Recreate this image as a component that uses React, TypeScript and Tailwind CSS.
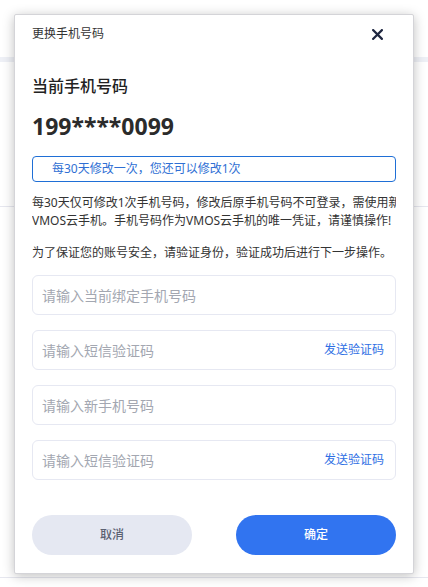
import React from "react";

const font = { fontFamily: '"Noto Sans", "Noto Sans CJK SC", sans-serif' };

function Field({ placeholder, action }: { placeholder: string; action?: string }) {
  return (
    <div className="flex h-[40px] items-center justify-between rounded-[6px] border border-[#e6e8f2] bg-white pl-[9px] pr-[11px]">
      <span className="text-[14px] text-[#a3a7b1]">{placeholder}</span>
      {action && <span className="text-[12px] text-[#2f6fe4]">{action}</span>}
    </div>
  );
}

export default function App() {
  return (
    <div className="relative h-[587px] w-[428px] overflow-hidden bg-white" style={font}>
      <div className="absolute left-0 right-0 top-[57px] h-[5px] bg-[#eef0f6]" />
      <div className="absolute left-0 right-0 top-[206px] h-px bg-[#e6e7ef]" />
      <div className="absolute left-0 right-0 top-[577px] h-px bg-[#e6e7ef]" />
      <div className="absolute left-[14px] top-[14px] flex w-[400px] flex-col rounded-[2px] border border-[#d4d4d8] bg-white px-[17px] pb-[18px] shadow-[0_2px_12px_rgba(0,0,0,0.25)]">
        <div className="flex items-center justify-between pt-[9px]">
          <span className="text-[12px] leading-[20px] text-[#333]">更换手机号码</span>
          <svg width="11" height="11" viewBox="0 0 10 10" className="mr-[13px]">
            <path d="M1 1L9 9M9 1L1 9" stroke="#1e2640" strokeWidth="2" strokeLinecap="square" />
          </svg>
        </div>
        <div className="mt-[30px] text-[16px] font-medium leading-[24px] text-[#222]">当前手机号码</div>
        <div className="mt-[13px] text-[23px] font-bold leading-[30px] text-[#2b2b2b]">199****0099</div>
        <div className="mt-[15px] flex h-[26px] items-center rounded-[4px] border border-[#1f6fd6] pl-[19px] text-[12px] text-[#2f6fd4]">
          每30天修改一次，您还可以修改1次
        </div>
        <div className="mt-[12px] overflow-hidden whitespace-nowrap text-[12px] leading-[18px] text-[#333]">
          <div>每30天仅可修改1次手机号码，修改后原手机号码不可登录，需使用新</div>
          <div>VMOS云手机。手机号码作为VMOS云手机的唯一凭证，请谨慎操作!</div>
        </div>
        <div className="mt-[14px] whitespace-nowrap text-[12px] leading-[18px] text-[#333]">
          为了保证您的账号安全，请验证身份，验证成功后进行下一步操作。
        </div>
        <div className="mt-[13px] flex flex-col gap-[15px]">
          <Field placeholder="请输入当前绑定手机号码" />
          <Field placeholder="请输入短信验证码" action="发送验证码" />
          <Field placeholder="请输入新手机号码" />
          <Field placeholder="请输入短信验证码" action="发送验证码" />
        </div>
        <div className="mt-[35px] flex justify-between">
          <button className="h-[40px] w-[160px] rounded-full bg-[#e5e8f2] text-[12px] font-medium text-[#5b6172]">取消</button>
          <button className="h-[40px] w-[160px] rounded-full bg-[#3174f0] text-[12px] font-medium text-white">确定</button>
        </div>
      </div>
    </div>
  );
}
